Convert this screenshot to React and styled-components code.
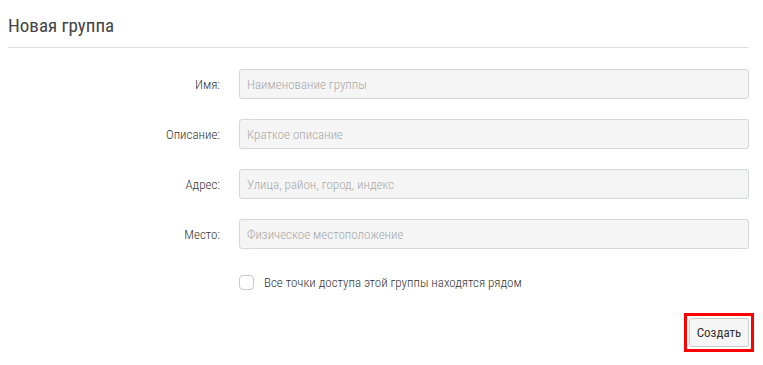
import React, { useState } from 'react';
import styled, { createGlobalStyle } from 'styled-components';

const GlobalStyle = createGlobalStyle`
  body {
    margin: 0;
    background: #fff;
    font-family: "Roboto Condensed", "Liberation Sans Narrow", Roboto, sans-serif;
    font-weight: 300;
  }
`;

const Page = styled.div`
  padding: 14px 14px 0 8px;
`;

const Title = styled.h2`
  margin: 0;
  padding-bottom: 10px;
  font-size: 19px;
  font-weight: 400;
  line-height: 23px;
  color: #444;
  border-bottom: 1px solid #ddd;
`;

const Form = styled.form`
  display: grid;
  grid-template-columns: 212px 1fr;
  column-gap: 19px;
  row-gap: 20px;
  padding-top: 21px;
  align-items: center;
`;

const Label = styled.label`
  text-align: right;
  font-size: 13px;
  font-weight: 300;
  color: #333;
`;

const Input = styled.input`
  height: 30px;
  box-sizing: border-box;
  padding: 0 7px;
  background: #f5f5f5;
  border: 1px solid #d3d6da;
  border-radius: 3px;
  font-family: inherit;
  font-size: 13px;
  font-weight: 300;
  color: #333;
  outline: none;

  &::placeholder {
    color: #a8a8a8;
  }
`;

const CheckRow = styled.label`
  grid-column: 2;
  display: flex;
  align-items: center;
  gap: 10px;
  margin-top: 6px;
  font-size: 13px;
  font-weight: 300;
  color: #333;
  cursor: pointer;
`;

const Box = styled.span`
  width: 15px;
  height: 15px;
  box-sizing: border-box;
  border: 1px solid #c5c8cc;
  border-radius: 4px;
  background: ${(p) => (p.checked ? '#e8e8e8' : '#fff')};
`;

const Footer = styled.div`
  grid-column: 1 / 3;
  display: flex;
  justify-content: flex-end;
  margin-top: 3px;
  margin-right: -5px;
`;

const Highlight = styled.div`
  border: 3px solid #f00;
  padding: 2px;
  display: flex;
`;

const Button = styled.button`
  width: 60px;
  height: 29px;
  background: #f5f5f5;
  border: 1px solid #ccc;
  border-radius: 3px;
  font-family: inherit;
  font-size: 13px;
  font-weight: 400;
  color: #333;
  cursor: pointer;
`;

const fields = [
  { label: 'Имя:', placeholder: 'Наименование группы' },
  { label: 'Описание:', placeholder: 'Краткое описание' },
  { label: 'Адрес:', placeholder: 'Улица, район, город, индекс' },
  { label: 'Место:', placeholder: 'Физическое местоположение' },
];

export default function App() {
  const [near, setNear] = useState(false);

  return (
    <Page>
      <GlobalStyle />
      <Title>Новая группа</Title>
      <Form onSubmit={(e) => e.preventDefault()}>
        {fields.map((f) => (
          <React.Fragment key={f.label}>
            <Label>{f.label}</Label>
            <Input type="text" placeholder={f.placeholder} />
          </React.Fragment>
        ))}
        <CheckRow onClick={() => setNear(!near)}>
          <Box checked={near} />
          Все точки доступа этой группы находятся рядом
        </CheckRow>
        <Footer>
          <Highlight>
            <Button type="submit">Создать</Button>
          </Highlight>
        </Footer>
      </Form>
    </Page>
  );
}
